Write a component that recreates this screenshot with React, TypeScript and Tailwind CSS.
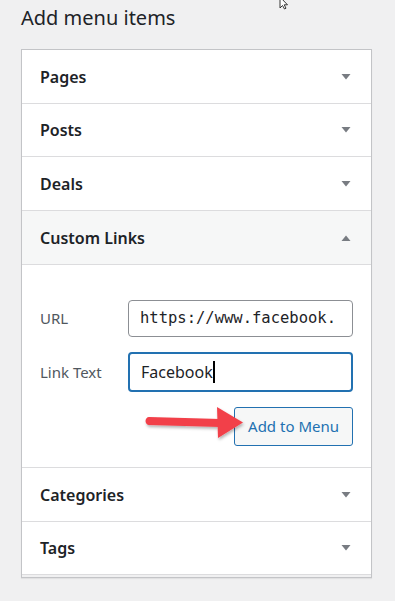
import React from 'react';

const Caret = ({ up }: { up?: boolean }) => (
    <svg width="10" height="6" viewBox="0 0 10 6" className="text-[#787c82]">
        {up ? <path d="M0.5 6 L5 0.5 L9.5 6 Z" fill="currentColor" /> : <path d="M0.5 0 L9.5 0 L5 5.5 Z" fill="currentColor" />}
    </svg>
);

const Row = ({ label, open, h = 'h-[54px]' }: { label: string; open?: boolean; h?: string }) => (
    <div
        className={`flex items-center justify-between ${h} pl-[18px] pr-[20px] border-b border-[#dcdcde] ${
            open ? 'bg-[#f6f7f7]' : 'bg-white'
        }`}
    >
        <span className="text-[16px] font-semibold text-[#1d2327]">{label}</span>
        <Caret up={open} />
    </div>
);

export default function App() {
    return (
        <div className="relative min-h-[601px] bg-[#f0f0f1] font-['Noto_Sans','Open_Sans',sans-serif] overflow-hidden">
            {/* mouse pointer */}
            <svg className="absolute left-[279px] top-0" width="14" height="10" viewBox="0 0 14 10">
                <path d="M1 -3 L1 8 L3.5 5.5 L5.5 9 L7 8.2 L5.2 4.8 L8.5 4.8 Z" fill="white" stroke="#222" strokeWidth="0.9" />
            </svg>

            <div className="px-[21px] pt-[4px]">
                <h2 className="text-[20px] leading-[28px] text-[#1d2327] font-normal">Add menu items</h2>

                <div className="mt-[17px] w-[351px] border border-[#c3c4c7] bg-white shadow-[0_1px_1px_rgba(0,0,0,0.06)]">
                    <Row label="Pages" />
                    <Row label="Posts" h="h-[53px]" />
                    <Row label="Deals" />
                    <Row label="Custom Links" open />

                    <div className="relative border-b border-[#dcdcde] pt-[35px] pb-[21px] pl-[18px] pr-[18px]">
                        <div className="flex items-center">
                            <label className="w-[88px] text-[15px] text-[#50575e]">URL</label>
                            <div className="flex-1 h-[37px] flex items-center px-[11px] border border-[#8c8f94] rounded-[4px] overflow-hidden whitespace-nowrap font-['DejaVu_Sans_Mono',monospace] text-[15.5px] text-[#1d2327]">
                                https://www.facebook.
                            </div>
                        </div>
                        <div className="flex items-center mt-[15px]">
                            <label className="w-[88px] text-[15px] text-[#50575e]">Link Text</label>
                            <div className="flex-1 h-[40px] flex items-center px-[11px] border-2 border-[#2271b1] rounded-[4px] text-[16px] text-[#1d2327]">
                                Facebook
                                <span className="w-[1.5px] h-[22px] bg-black ml-[0.5px]" />
                            </div>
                        </div>
                        <div className="flex justify-end mt-[15px]">
                            <button className="h-[39px] px-[13px] border border-[#2271b1] rounded-[3px] bg-[#f6f7f7] text-[#2271b1] text-[15px]">
                                Add to Menu
                            </button>
                        </div>

                        {/* annotation arrow */}
                        <svg className="absolute left-[120px] top-[138px]" width="110" height="42" viewBox="0 0 110 42">
                            <defs>
                                <filter id="sh" x="-10%" y="-30%" width="130%" height="170%">
                                    <feDropShadow dx="1" dy="2" stdDeviation="1.5" floodColor="#000" floodOpacity="0.3" />
                                </filter>
                            </defs>
                            <g filter="url(#sh)" fill="#f2404a">
                                <path d="M7 14 C5 14 3.5 16 3.5 18 C3.5 20 5 22 7 22 L78 24 L78 16 Z" />
                                <path d="M75 4 L101 19.5 L76 35 Z" />
                            </g>
                        </svg>
                    </div>

                    <Row label="Categories" />
                    <Row label="Tags" h="h-[53px]" />
                    <div className="h-[2px] bg-[#f0f0f1]" />
                </div>
            </div>
        </div>
    );
}
